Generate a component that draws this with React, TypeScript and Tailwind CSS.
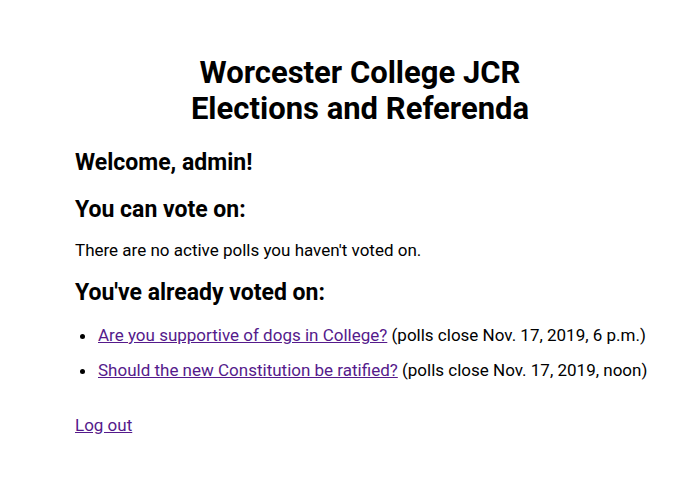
export default function App() {
  const voted = [
    { q: "Are you supportive of dogs in College?", close: "(polls close Nov. 17, 2019, 6 p.m.)" },
    { q: "Should the new Constitution be ratified?", close: "(polls close Nov. 17, 2019, noon)" },
  ];

  return (
    <div className="min-h-screen bg-white text-black font-['Roboto',sans-serif]">
      <div className="ml-[75px] w-[570px] pt-[55px]">
        <h1 className="text-center text-[31px] leading-[36px] font-bold">
          Worcester College JCR
          <br />
          Elections and Referenda
        </h1>

        <h2 className="mt-[21px] text-[23px] leading-[30px] font-bold">Welcome, admin!</h2>

        <h2 className="mt-[17px] text-[23px] leading-[30px] font-bold">You can vote on:</h2>
        <p className="mt-[15px] text-[17px] leading-[20px]">
          There are no active polls you haven't voted on.
        </p>

        <h2 className="mt-[18px] text-[23px] leading-[30px] font-bold">You've already voted on:</h2>
        <ul className="mt-[17px] flex list-disc flex-col gap-[15px] pl-[22px] text-[17px] leading-[20px]">
          {voted.map((v) => (
            <li key={v.q} className="whitespace-nowrap pl-[1px]">
              <a href="#" className="text-[#551a8b] underline">
                {v.q}
              </a>{" "}
              {v.close}
            </li>
          ))}
        </ul>

        <p className="mt-[35px] text-[17px] leading-[20px]">
          <a href="#" className="text-[#551a8b] underline">
            Log out
          </a>
        </p>
      </div>
    </div>
  );
}
